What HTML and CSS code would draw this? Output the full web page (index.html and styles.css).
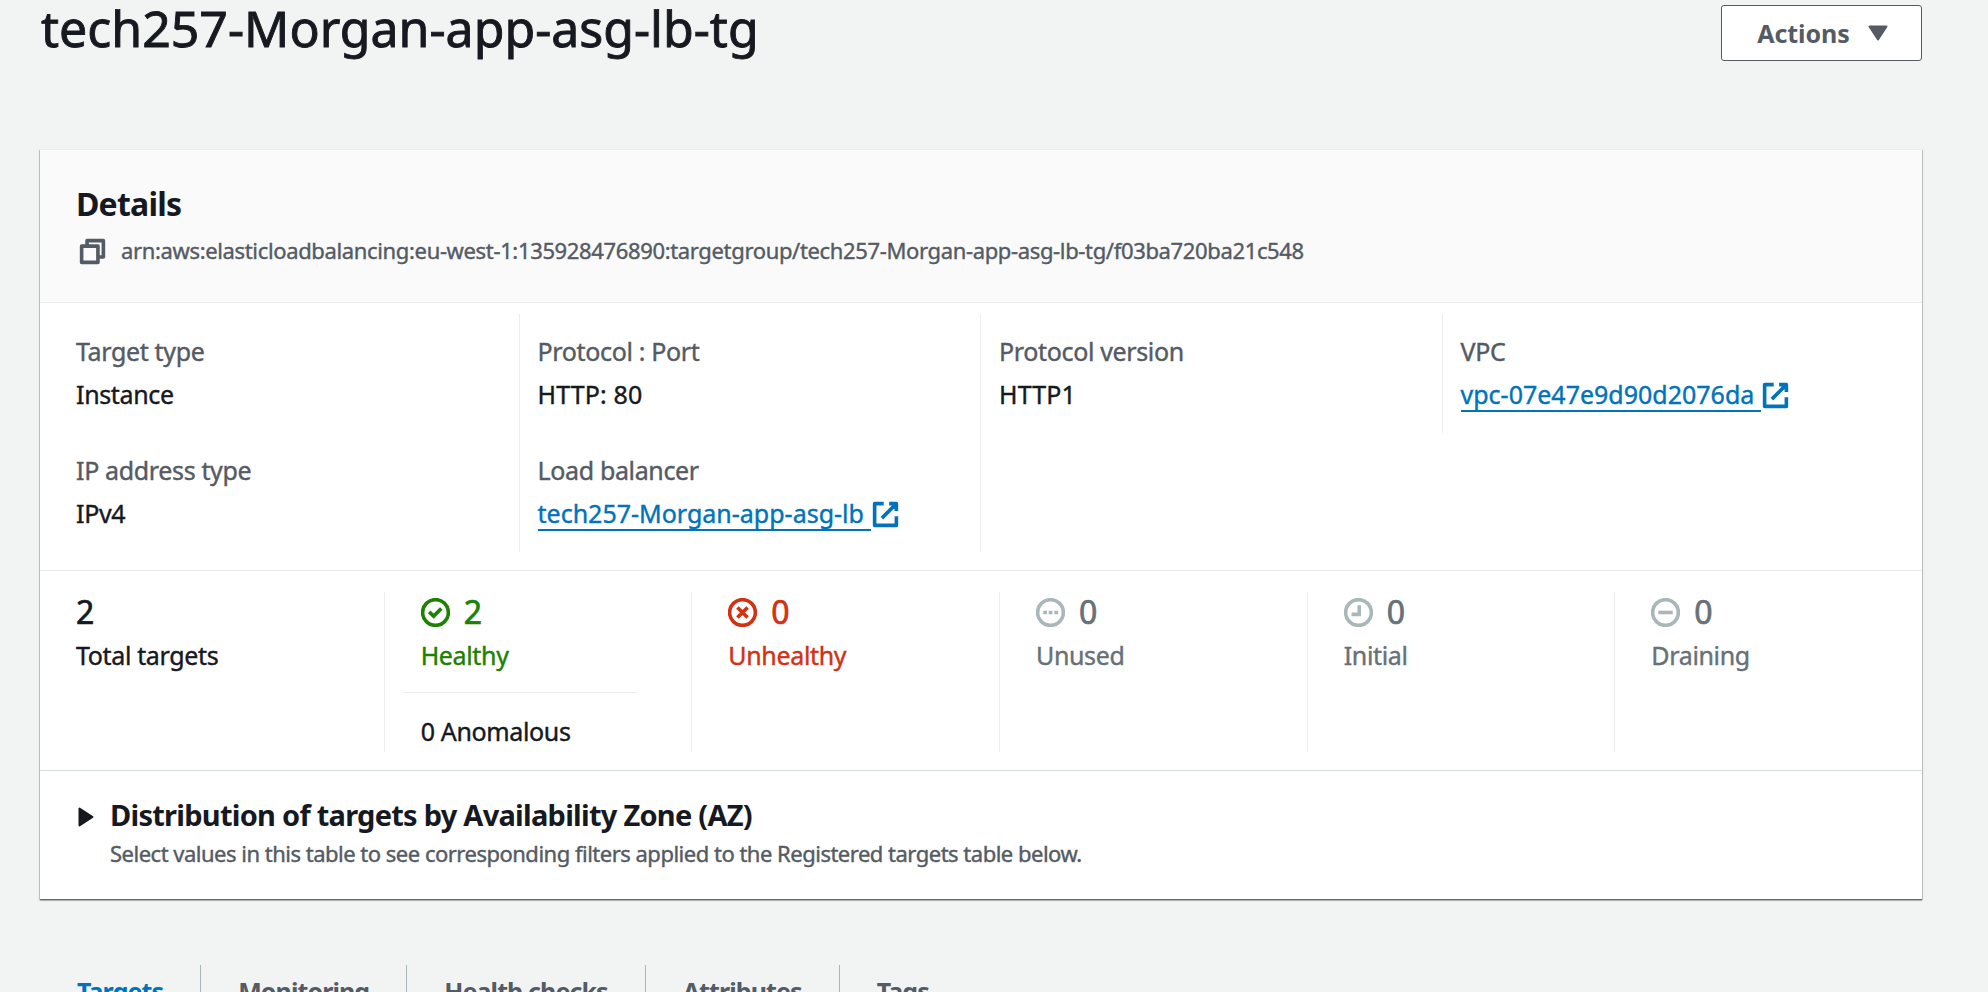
FILE: index.html
```html
<!DOCTYPE html>
<html lang="en">
<head>
<meta charset="utf-8">
<title>tech257-Morgan-app-asg-lb-tg</title>
<link rel="stylesheet" href="styles.css">
</head>
<body>
<header class="page-header">
  <h1 class="title">tech257-Morgan-app-asg-lb-tg</h1>
  <button class="actions" type="button">Actions
    <svg class="caret" viewBox="0 0 20 16"><path d="M1.5 1.5h17L10 14.5z"/></svg>
  </button>
</header>

<main class="panel">
  <div class="panel-header">
    <h2 class="panel-title">Details</h2>
    <div class="arn">
      <svg class="icon" viewBox="0 0 16 16"><path d="M2 5h9v9H2zM5 5V2h9v9h-3"/></svg>
      <span>arn:aws:elasticloadbalancing:eu-west-1:135928476890:targetgroup/tech257-Morgan-app-asg-lb-tg/f03ba720ba21c548</span>
    </div>
  </div>

  <dl class="details">
    <div class="cell"><dt>Target type</dt><dd>Instance</dd></div>
    <div class="cell"><dt>Protocol : Port</dt><dd class="caps">HTTP: 80</dd></div>
    <div class="cell"><dt>Protocol version</dt><dd class="caps">HTTP1</dd></div>
    <div class="cell"><dt>VPC</dt><dd><a class="link"><span class="link-text">vpc-07e47e9d90d2076da</span><svg class="icon" viewBox="0 0 16 16"><path d="M10 2h4v4M6 10l8-8M14 9v5H2V2h5"/></svg></a></dd></div>
    <div class="cell"><dt>IP address type</dt><dd>IPv4</dd></div>
    <div class="cell"><dt>Load balancer</dt><dd><a class="link"><span class="link-text">tech257-Morgan-app-asg-lb</span><svg class="icon" viewBox="0 0 16 16"><path d="M10 2h4v4M6 10l8-8M14 9v5H2V2h5"/></svg></a></dd></div>
    <div class="cell"></div>
  </dl>

  <section class="stats">
    <div class="stat">
      <div class="count">2</div>
      <div class="label">Total targets</div>
    </div>
    <div class="stat healthy">
      <div class="count"><svg class="icon" viewBox="0 0 16 16"><circle cx="8" cy="8" r="7.1"/><path d="M4.5 7.7 7 10l4.2-4.2"/></svg>2</div>
      <div class="label">Healthy</div>
      <div class="anomalous">0 Anomalous</div>
    </div>
    <div class="stat unhealthy">
      <div class="count"><svg class="icon" viewBox="0 0 16 16"><circle cx="8" cy="8" r="7.1"/><path d="m5.2 5.2 5.6 5.6m0-5.6-5.6 5.6"/></svg>0</div>
      <div class="label">Unhealthy</div>
    </div>
    <div class="stat muted">
      <div class="count"><svg class="icon" viewBox="0 0 16 16"><circle cx="8" cy="8" r="7.1"/><path d="M4 8h2.1M7 8h2.1M10.1 8h2.1"/></svg>0</div>
      <div class="label">Unused</div>
    </div>
    <div class="stat muted">
      <div class="count"><svg class="icon" viewBox="0 0 16 16"><circle cx="8" cy="8" r="7.1"/><path d="M8.4 4v5H4.2"/></svg>0</div>
      <div class="label">Initial</div>
    </div>
    <div class="stat muted">
      <div class="count"><svg class="icon" viewBox="0 0 16 16"><circle cx="8" cy="8" r="7.1"/><path d="M4 8h8"/></svg>0</div>
      <div class="label">Draining</div>
    </div>
  </section>

  <section class="distribution">
    <svg class="expand" viewBox="0 0 16 20"><path d="M1.5 1.5v17L14.5 10z"/></svg>
    <div>
      <h3 class="dist-title">Distribution of targets by Availability Zone (AZ)</h3>
      <p class="dist-text">Select values in this table to see corresponding filters applied to the Registered targets table below.</p>
    </div>
  </section>
</main>

<nav class="tabs">
  <a class="tab active">Targets</a>
  <a class="tab">Monitoring</a>
  <a class="tab">Health checks</a>
  <a class="tab">Attributes</a>
  <a class="tab">Tags</a>
</nav>
</body>
</html>
```

FILE: styles.css
```css
* { box-sizing: border-box; }

body {
  margin: 0;
  height: 992px;
  padding: 0 66px 0 40px;
  overflow: hidden;
  background: #f2f4f3;
  color: #16191f;
  font: 400 25px/38px "Noto Sans", "Open Sans", sans-serif;
  letter-spacing: -0.35px;
  -webkit-text-stroke: 0.4px currentColor;
}

h1, h2, h3, p, dl, dd { margin: 0; }

.page-header {
  display: flex;
  justify-content: space-between;
  align-items: flex-start;
  height: 149px;
}

.title {
  padding-left: 1px;
  font-size: 50px;
  font-weight: 400;
  line-height: 57px;
  letter-spacing: 0;
  -webkit-text-stroke-width: 0.9px;
}

.actions {
  display: flex;
  align-items: center;
  justify-content: center;
  gap: 18px;
  width: 201px;
  height: 56px;
  margin-top: 5px;
  padding: 0 0 1px 2px;
  border: 1px solid #545b64;
  border-radius: 3px;
  background: #fff;
  color: #545b64;
  font: 700 25px/38px "Noto Sans", sans-serif;
  letter-spacing: -0.1px;
  -webkit-text-stroke-width: 0;
}

.caret { width: 20px; height: 16px; }
.caret path, .expand path {
  fill: currentColor;
  stroke: currentColor;
  stroke-width: 2;
  stroke-linejoin: round;
}

.icon {
  flex: none;
  width: 29px;
  height: 29px;
  fill: none;
  stroke: currentColor;
  stroke-width: 2;
}

.panel {
  height: 750px;
  background: #fff;
  box-shadow: 0 1px 1px 0 rgba(0, 28, 36, 0.35), 1px 1px 1px 0 rgba(0, 28, 36, 0.15),
    -1px 1px 1px 0 rgba(0, 28, 36, 0.15), 0 2px 1px 0 rgba(0, 28, 36, 0.2);
}

.panel-header {
  height: 154px;
  padding: 34px 36px 0;
  border-top: 1px solid #eaeded;
  border-bottom: 1px solid #eaeded;
  background: #fafafa;
}

.panel-title {
  font-size: 32px;
  font-weight: 700;
  line-height: 40px;
  letter-spacing: -0.8px;
  -webkit-text-stroke-width: 0;
}

.arn {
  display: flex;
  gap: 14px;
  margin-top: 11px;
  padding-left: 2px;
  color: #545b64;
  font-size: 22px;
  line-height: 30px;
}
.arn .icon {
  margin-top: 2px;
  stroke-linejoin: round;
}

.details {
  display: grid;
  grid-template-columns: repeat(4, 461.5px);
  grid-auto-rows: 119px;
  height: 268px;
  padding: 11px 18px 0 17px;
  border-bottom: 1px solid #eaeded;
}

.cell {
  padding: 18px 0 0 18px;
  border-left: 1px solid #eaeded;
}
.cell:nth-child(4n + 1) { border-left-color: transparent; }
.cell dt { color: #545b64; }
.cell dd { margin-top: 5px; }
.cell .caps { letter-spacing: 0.15px; }

.link {
  display: inline-flex;
  color: #0073bb;
  letter-spacing: 0;
}
.link-text {
  height: 37px;
  padding-right: 7px;
  border-bottom: 2px solid #0073bb;
}
.link .icon {
  margin-top: 6px;
  stroke-linejoin: round;
}

.stats {
  display: grid;
  grid-template-columns: repeat(6, 1fr);
  height: 200px;
  padding: 21px 0 18px 36px;
  border-bottom: 1px solid #d5dbdb;
}

.stat {
  padding: 2px 0 0 36px;
  border-left: 1px solid #eaeded;
}
.stat:first-child { padding-left: 0; border-left: 0; }

.count {
  display: flex;
  align-items: center;
  gap: 14px;
  font-size: 32px;
  line-height: 36px;
  -webkit-text-stroke-width: 0.7px;
}
.label { margin-top: 6px; }

.anomalous {
  width: 235px;
  margin: 18px 0 0 -18px;
  padding: 19px 0 0 18px;
  border-top: 1px solid #eaeded;
  color: #16191f;
}

.healthy { color: #1d8102; }
.unhealthy { color: #d13212; }
.muted { color: #687078; }
.muted .icon { color: #aab7b8; }

.distribution {
  display: flex;
  gap: 16px;
  padding: 26px 0 0 38px;
}
.expand { width: 16px; height: 20px; margin-top: 10px; }

.dist-title {
  font-size: 29px;
  font-weight: 700;
  line-height: 36px;
  letter-spacing: -0.74px;
  -webkit-text-stroke-width: 0;
}
.dist-text {
  margin-top: 5px;
  color: #545b64;
  font-size: 22px;
  line-height: 30px;
  letter-spacing: -0.5px;
}

.tabs {
  display: flex;
  margin-top: 66px;
}
.tab {
  padding: 11px 37px 0;
  border-left: 1px solid #aab7b8;
  color: #545b64;
  font-weight: 700;
  line-height: 30px;
  letter-spacing: -0.9px;
  -webkit-text-stroke-width: 0;
}
.tab:first-child { padding-left: 37px; border-left: 0; }
.tab.active { color: #0073bb; }
```
